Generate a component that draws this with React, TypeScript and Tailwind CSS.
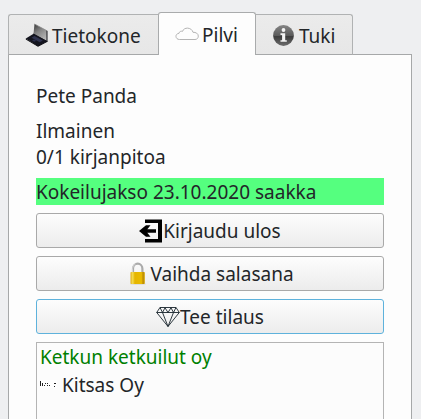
import type { ReactNode } from "react";

function LaptopIcon() {
  return (
    <svg width="24" height="24" viewBox="0 0 24 24" className="-mt-[2px] shrink-0">
      <defs>
        <linearGradient id="screen" x1="0.1" y1="0" x2="0.7" y2="1">
          <stop offset="0" stopColor="#3c3c3c" />
          <stop offset="0.45" stopColor="#858585" />
          <stop offset="1" stopColor="#b8b8b8" />
        </linearGradient>
      </defs>
      <path d="M9.500 1 22 7.800V18L8.500 10.800Z" fill="url(#screen)" />
      <path d="M9.500 1 22 7.800" stroke="#888" strokeWidth=".8" />
      <path d="M22 7.800V18.500L8.500 11" fill="none" stroke="#15151a" strokeWidth="1" />
      <path d="M.8 15.500 8.500 10.800 22.500 18.200 13 23.200Z" fill="#14151f" />
      <path d="M.8 15.500v1L13 23.700l9.500-5v-.8L13 22.700Z" fill="#050509" />
      <path d="M6.500 14.700 9.500 13l8.300 4.600-3 1.700Z" fill="#30344f" />
      <path d="m7 17.500 2-1.100 2.400 1.400-2 1Z" fill="#292d4a" />
    </svg>
  );
}

function CloudIcon() {
  return (
    <svg width="24" height="24" viewBox="0 0 24 24" fill="none" stroke="#b4b4b4" className="-mt-[2px] shrink-0">
      <path d="M4.500 17.500C.2 17.500-.4 11.800 4 11.300c.2-1.700 2-2.500 3.500-1.900C8.700 5 16.500 4.800 18 10.300c2.700-.2 5.300 1.200 5.300 3.800 0 2-1.300 3.400-3.300 3.400Z" />
    </svg>
  );
}

function InfoIcon() {
  return (
    <svg width="24" height="24" viewBox="0 0 24 24" className="-mt-[2px] shrink-0">
      <defs>
        <linearGradient id="disc" x1="0" y1="0" x2="0" y2="1">
          <stop offset="0" stopColor="#858585" />
          <stop offset="0.5" stopColor="#5a5a5a" />
          <stop offset="0.55" stopColor="#3c3c3c" />
          <stop offset="1" stopColor="#6c6c6c" />
        </linearGradient>
      </defs>
      <circle cx="11.500" cy="12.500" r="10.400" fill="url(#disc)" />
      <circle cx="11.500" cy="7" r="1.900" fill="#f4f4f4" />
      <path d="M8.500 10.300h4.700v6.900h1.600v1.600H8.500v-1.600h1.600v-5.200H8.500Z" fill="#f4f4f4" />
    </svg>
  );
}

function LogoutIcon() {
  return (
    <svg width="24" height="24" viewBox="0 0 24 24" className="shrink-0">
      <path d="M6 .5h17v23H6V20h13V4H6Z" fill="#000" />
      <path d="M0 12 7 6.300h4.500L8.300 10.300H17v3.400H8.300l3.200 4H7Z" fill="#000" />
    </svg>
  );
}

function LockIcon() {
  return (
    <svg width="24" height="24" viewBox="0 0 24 24" className="shrink-0">
      <defs>
        <linearGradient id="brass" x1="0" y1="0" x2="1" y2="0">
          <stop offset="0" stopColor="#e0ae16" />
          <stop offset="0.15" stopColor="#f5dc50" />
          <stop offset="0.3" stopColor="#e5b500" />
          <stop offset="0.75" stopColor="#eabb00" />
          <stop offset="0.88" stopColor="#b98700" />
          <stop offset="1" stopColor="#e5c440" />
        </linearGradient>
      </defs>
      <path d="M7 11V6.800a4.700 5.100 0 0 1 9.400 0V11" fill="none" stroke="#aaa" strokeWidth="2.200" />
      <path d="M6.500 11V6.500a5 5 0 0 1 3-4.500" fill="none" stroke="#ddd" strokeWidth=".8" />
      <ellipse cx="12" cy="22" rx="8" ry="1" fill="#ddd" />
      <rect x="4.500" y="10" width="14.500" height="12" rx=".8" fill="url(#brass)" />
    </svg>
  );
}

function DiamondIcon() {
  return (
    <svg width="24" height="24" viewBox="0 0 24 24" fill="none" stroke="#17242b" strokeWidth=".9" strokeLinejoin="round" className="shrink-0">
      <path d="M4 2.500h16l3.300 5L12 21.500.7 7.500Z" />
      <path d="M.7 7.500h22.600M4 2.500l2.500 5L9 2.800l3 4.700 3-4.700 2.500 4.700 2.500-5M6.500 7.500 12 21.500l5.500-14" />
    </svg>
  );
}

function KitsasIcon() {
  return (
    <svg width="18" height="8" viewBox="0 0 18 8" className="-mt-[3px] shrink-0" shapeRendering="crispEdges">
      <rect width="17" height="8" fill="#fff" />
      <path d="M0 1h1v5H0ZM2 3h1v3H2ZM4 5h1v1H4ZM5 3h1v1H5ZM7 3h1v1H7ZM7 5h1v1H7ZM9 5h1v1H9ZM14 3h2v1h-2ZM14 6h1v1h-1Z" fill="#222" />
    </svg>
  );
}

function SideTab({ children, className }: { children: ReactNode; className: string }) {
  return (
    <div className={`flex h-[41px] items-center gap-[3px] border border-[#b0b2b3] border-b-[#a6a8a9] bg-gradient-to-b from-[#ebebeb] to-[#e7e7e7] pl-4 pt-[2px] ${className}`}>
      {children}
    </div>
  );
}

function PushButton({ icon, label, focused = false }: { icon: ReactNode; label: string; focused?: boolean }) {
  return (
    <button
      className={`mb-2 flex h-[35px] w-full shrink-0 items-center justify-center rounded-[3px] border bg-gradient-to-b from-[#fdfdfd] to-[#ececec] ${focused ? "border-[#5eb2dc]" : "border-[#a9a9a9]"}`}
    >
      {icon}
      <span>{label}</span>
    </button>
  );
}

export default function App() {
  return (
    <div className="flex h-[419px] w-[421px] flex-col overflow-hidden bg-[#eeeff1] pl-2 pt-3 font-['Noto_Sans',sans-serif] text-[19px] leading-[26px] text-[#232629]">
      <div className="z-10 -mb-px flex h-[43px] shrink-0 items-end">
        <SideTab className="w-[150px] rounded-tl-[3px] border-r-0">
          <LaptopIcon />
          <span>Tietokone</span>
        </SideTab>
        <div className="flex h-[43px] w-[98px] items-center gap-[3px] rounded-t-[3px] border border-b-0 border-[#a9abac] bg-[#fdfdfd] pl-4 pt-[2px]">
          <CloudIcon />
          <span>Pilvi</span>
        </div>
        <SideTab className="w-[97px] rounded-tr-[3px] border-l-0">
          <InfoIcon />
          <span>Tuki</span>
        </SideTab>
      </div>
      <div className="flex w-[404px] grow flex-col border border-b-0 border-[#a6a8a9] bg-[#fdfdfd] pl-[27px] pr-[27px] pt-7">
        <p className="mb-[9px]">Pete Panda</p>
        <p>Ilmainen</p>
        <p className="mb-2">0/1 kirjanpitoa</p>
        <p className="mb-2 h-[27px] shrink-0 bg-[#55ff7f] leading-[28px]">Kokeilujakso 23.10.2020 saakka</p>
        <PushButton icon={<LogoutIcon />} label="Kirjaudu ulos" />
        <PushButton icon={<LockIcon />} label="Vaihda salasana" />
        <PushButton icon={<DiamondIcon />} label="Tee tilaus" focused />
        <div className="grow border border-b-0 border-[#b4b4b4] bg-[#fcfcfc] pl-[3px]">
          <p className="h-7 leading-7 text-[#008000]">Ketkun ketkuilut oy</p>
          <div className="flex h-7 items-center gap-1">
            <KitsasIcon />
            <span>Kitsas Oy</span>
          </div>
        </div>
      </div>
    </div>
  );
}
